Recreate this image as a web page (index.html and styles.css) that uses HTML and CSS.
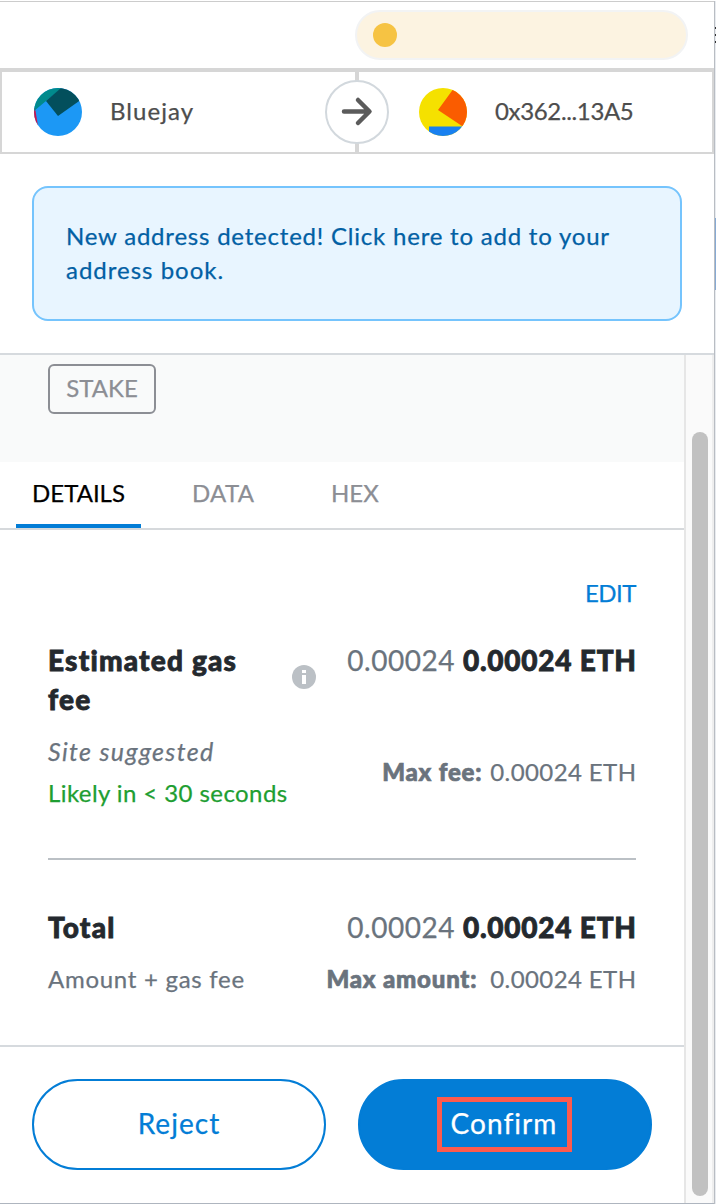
FILE: index.html
```
<!DOCTYPE html>
<html lang="en">
<head>
<meta charset="utf-8">
<title>Confirm transaction</title>
<link rel="stylesheet" href="styles.css">
</head>
<body>
<div class="window">
  <header class="topbar"><div class="network"><span class="network-dot"></span></div></header>
  <section class="parties">
    <div class="party sender">
      <svg class="avatar" viewBox="0 0 48 48"><defs><clipPath id="round"><circle cx="24" cy="24" r="24"/></clipPath></defs><g clip-path="url(#round)"><path fill="#1c98f5" d="M0 0h48v48H0z"/><path fill="#c8144c" d="M0 20l1 0 3 18H0z"/><path fill="#018a8c" d="M0 0h28v0L12 13 0 23z"/><path fill="#034f5c" d="M27 0h21v11L24 28 12 13z"/></g></svg>
      <span class="name">Bluejay</span>
    </div>
    <div class="divider"><div class="arrow"><svg width="32" height="32" viewBox="0 0 32 32" fill="none" stroke="#5b5b5b" stroke-width="4.5" stroke-linecap="round" stroke-linejoin="round"><path d="M3 15.5h25M17 4l11.5 11.5-11.5 11.5"/></svg></div></div>
    <div class="party recipient">
      <svg class="avatar" viewBox="0 0 48 48"><g clip-path="url(#round)"><path fill="#f5e100" d="M0 0h48v48H0z"/><path fill="#fa5c00" d="M34 0h14v38h-5L19 22 35 0z"/><path fill="#1880f0" d="M10 38.5h38v10H10z"/></g></svg>
      <span class="address">0x362...13A5</span>
    </div>
  </section>
  <section class="notice"><div class="alert"><div class="alert-one">New address detected! Click here to add to your</div><div class="alert-two">address book.</div></div></section>
  <main class="viewport">
    <div class="content">
      <section class="summary"><span class="action">STAKE</span></section>
      <nav class="tabs"><span class="tab active">DETAILS</span><span class="tab data">DATA</span><span class="tab hex">HEX</span></nav>
      <section class="details">
        <div class="edit">EDIT</div>
        <div class="gas">
          <div class="gas-title"><div class="title estimated">Estimated gas</div><div class="title fee">fee</div></div>
          <svg class="info" viewBox="0 0 24 24"><circle cx="12" cy="12" r="12" fill="#bbc0c5"/><path fill="#fff" d="M10 5h4v3h-4zM10 10h4v9h-4z"/></svg>
          <div class="amount"><span class="light">0.00024</span><strong>0.00024 ETH</strong></div>
        </div>
        <div class="gas-notes">
          <div><div class="site">Site suggested</div><div class="likely">Likely in &lt; 30 seconds</div></div>
          <div class="max"><b class="max-fee">Max fee:</b><span class="small-value">0.00024 ETH</span></div>
        </div>
        <div class="total">
          <div class="line"><div class="title total-label">Total</div><div class="amount"><span class="light">0.00024</span><strong>0.00024 ETH</strong></div></div>
          <div class="line note"><span class="sum">Amount + gas fee</span><div class="max"><b class="max-amount">Max amount:</b><span class="small-value">0.00024 ETH</span></div></div>
        </div>
      </section>
      <footer class="buttons"><button class="reject"><span>Reject</span></button><button class="confirm"><span class="highlight">Confirm</span></button></footer>
    </div>
    <div class="track"><div class="thumb"></div></div>
  </main>
</div>
<aside class="edge"><div class="edge-menu"><i></i><i></i><i></i></div><div class="edge-accent"></div></aside>
</body>
</html>
```
FILE: styles.css
```
* { box-sizing: border-box; }
body { margin: 0; width: 716px; height: 1204px; overflow: hidden; display: flex; background: #fff; color: #24292e; font-family: Lato, "Liberation Sans", sans-serif; font-size: 24px; white-space: nowrap; font-variant-ligatures: none; -webkit-text-stroke: .25px currentColor; }
.window { width: 714px; height: 1203px; margin-top: 1px; border-top: 1px solid #ccc; border-bottom: 1px solid #aeb5bf; display: flex; flex-direction: column; }
.topbar { height: 66px; flex: none; display: flex; justify-content: flex-end; padding: 8px 26px 0 0; }
.network { width: 333px; height: 50px; border: 2px solid #f2f3f4; border-radius: 25px; background: #fcf3e1; display: flex; align-items: center; padding-left: 16px; }
.network-dot { width: 24px; height: 24px; border-radius: 50%; background: #f6c343; }
.parties { height: 86px; flex: none; display: grid; grid-template-columns: 323px 64px 1fr; border: 2px solid #d6d6d6; border-top-width: 4px; color: #4d4d4d; }
.party { display: flex; align-items: center; }
.sender { padding-left: 32px; }
.recipient { padding-left: 30px; }
.avatar { width: 48px; height: 48px; }
.name, .address { margin-left: 28px; padding-bottom: 3px; }
.name { letter-spacing: 1.05px; }
.address { letter-spacing: -.35px; }
.divider { display: flex; align-items: center; background: linear-gradient(#d6d6d6, #d6d6d6) center / 4px 100% no-repeat; }
.arrow { width: 64px; height: 64px; border: 2px solid #d2d8dd; border-radius: 50%; background: #fff; display: flex; align-items: center; justify-content: center; }
.notice { height: 199px; flex: none; padding: 32px; }
.alert { width: 650px; height: 135px; border: 2px solid #75c4fd; border-radius: 16px; background: #e8f5ff; color: #0260a4; padding: 31px 32px; line-height: 34px; }
.alert-one { letter-spacing: .79px; }
.alert-two { letter-spacing: 1px; }
.viewport { border-top: 2px solid #d6dade; display: flex; flex: 1; }
.content { width: 684px; }
.summary { height: 107px; background: #f9fafa; padding: 9px 48px; }
.action { width: 108px; height: 50px; border: 2px solid #8c8e94; border-radius: 6px; color: #8c8e94; display: flex; align-items: center; justify-content: center; padding-bottom: 4px; }
.tabs { height: 68px; border-bottom: 2px solid #d6d9dc; padding-left: 16px; display: flex; color: #8c8e94; }
.tab { height: 66px; line-height: 61px; }
.active { width: 125px; text-align: center; border-bottom: 4px solid #037dd6; color: #000; }
.data { margin-left: 51px; width: 139px; letter-spacing: .3px; }
.details { height: 515px; padding: 0 48px; display: flex; flex-direction: column; }
.edit { height: 111px; padding-top: 46px; line-height: 34px; color: #037dd6; text-align: right; letter-spacing: -.5px; }
.gas { display: flex; height: 91px; line-height: 39px; }
.gas-title { width: 244px; }
.title { font-size: 28px; font-weight: 900; letter-spacing: 1.2px; -webkit-text-stroke-width: .8px; }
.info { width: 24px; height: 24px; margin-top: 24px; }
.amount { margin-left: auto; display: flex; gap: 8px; font-size: 28px; line-height: 39px; }
.light { color: #6a737d; letter-spacing: .5px; }
.amount strong { font-weight: 900; letter-spacing: .77px; margin-right: -.77px; -webkit-text-stroke-width: .8px; }
.gas-notes { display: flex; justify-content: space-between; align-items: flex-start; height: 84px; line-height: 42px; color: #6a737d; }
.gas-notes > div:first-child { margin-top: -2px; }
.gas-notes .max { margin-top: 19px; }
.site { font-style: italic; font-size: 25px; letter-spacing: 1.35px; }
.likely { color: #1e9e31; letter-spacing: .42px; }
.max { display: flex; gap: 8px; }
.max b { font-weight: 900; letter-spacing: .8px; -webkit-text-stroke-width: .7px; }
.small-value { letter-spacing: .4px; margin-right: -.4px; }
.total { margin-top: 42px; border-top: 2px solid #bbc0c5; padding-top: 48px; }
.line { display: flex; justify-content: space-between; height: 39px; line-height: 39px; }
.note { margin-top: 12px; color: #6a737d; }
.sum { letter-spacing: .72px; }
.max-amount { margin-right: 5px; }
.buttons { height: 156px; border-top: 2px solid #d6dade; padding: 32px; display: flex; gap: 32px; margin: 0; }
.buttons button { width: 294px; height: 91px; border: 2px solid #037dd6; border-radius: 46px; padding: 0 0 3px; display: flex; align-items: center; justify-content: center; font: 28px Lato, sans-serif; letter-spacing: 1.05px; -webkit-text-stroke: .25px currentColor; background: #fff; color: #037dd6; }
.buttons .confirm { background: #037dd6; color: #fff; padding: 0 2px 1px 0; }
.highlight { width: 135px; height: 55px; border: 5px solid #fe5a4d; display: flex; align-items: center; justify-content: center; padding-bottom: 2px; }
.track { width: 30px; border-left: 2px solid #e6e6e6; border-right: 2px solid #eee; background: #fafafa; padding: 77px 0 0 6px; }
.thumb { width: 16px; height: 764px; border-radius: 8px; background: #c1c1c1; }
.edge { width: 2px; height: 1203px; margin-top: 1px; border-left: 1px solid #b9bdc3; background: #e8ebef; }
.edge-menu { height: 217px; padding-top: 26px; display: flex; flex-direction: column; gap: 5px; }
.edge-menu i { width: 1px; height: 2px; background: #333; }
.edge-accent { width: 1px; height: 72px; background: #86a9d3; }
```
